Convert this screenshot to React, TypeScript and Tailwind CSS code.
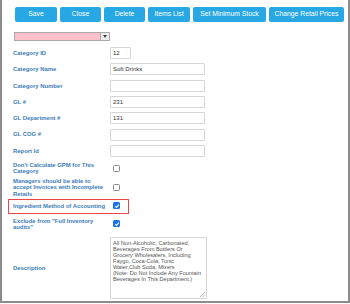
import React from "react";

const buttons = [
    { label: "Save", w: "w-[42px]" },
    { label: "Close", w: "w-[41px]" },
    { label: "Delete", w: "w-[41px]" },
    { label: "Items List", w: "w-[42px]" },
    { label: "Set Minimum Stock", w: "w-[73px]" },
    { label: "Change Retail Prices", w: "w-[75px]" },
];

const descriptionLines = [
    "All Non-Alcoholic, Carbonated,",
    "Beverages From Bottlers Or",
    "Grocery Wholesalers, Including",
    "Faygo, Coca-Cola, Tonic",
    "Water,Club Soda, Mixers",
    "(Note: Do Not Include Any Fountain",
    "Beverages In This Department.)",
];

function TextInput({ value = "", w = "w-[95px]" }: { value?: string; w?: string }) {
    return (
        <div className={`${w} h-[12px] border border-[#d6d6d6] rounded-[1px] bg-white flex items-center px-[2px] text-[6px] text-[#333]`}>
            {value}
        </div>
    );
}

function Checkbox({ checked = false }: { checked?: boolean }) {
    if (checked) {
        return (
            <div className="w-[7px] h-[7px] rounded-[1.5px] bg-[#1a73e8] flex items-center justify-center ml-[3px]">
                <svg width="6" height="6" viewBox="0 0 10 10">
                    <path d="M2 5.2 L4.2 7.4 L8.2 2.6" stroke="white" strokeWidth="1.8" fill="none" />
                </svg>
            </div>
        );
    }
    return <div className="w-[7px] h-[7px] rounded-[1.5px] border border-[#8a8a8a] bg-white ml-[3px]" />;
}

function Row({ label, h, children }: { label: React.ReactNode; h: string; children: React.ReactNode }) {
    return (
        <div className={`flex items-center ${h}`}>
            <div className="w-[97px] pr-[4px] text-[5.9px] leading-[6.4px] font-bold text-[#3a7cba]">{label}</div>
            {children}
        </div>
    );
}

export default function App() {
    return (
        <div className="w-[350px] h-[303px] bg-white border-l-2 border-r-2 border-b-2 border-[#8c8c8c] overflow-hidden" style={{ fontFamily: '"Liberation Sans", Arial, sans-serif' }}>
            <div className="flex gap-[3px] pl-[13px] pt-[7px]">
                {buttons.map((b) => (
                    <div key={b.label} className={`${b.w} h-[15px] rounded-[2px] bg-[#27a8e4] text-white text-[6.8px] flex items-center justify-center whitespace-nowrap`}>
                        {b.label}
                    </div>
                ))}
            </div>

            <div className="ml-[12px] mt-[10px] w-[96px] h-[9px] border border-[#a9a9a9] bg-[#ffc0cb] flex justify-end">
                <div className="w-[9px] h-full bg-[#ececec] border-l border-[#a9a9a9] flex items-center justify-center">
                    <svg width="4" height="3" viewBox="0 0 4 3">
                        <path d="M0 0 H4 L2 3 Z" fill="#444" />
                    </svg>
                </div>
            </div>

            <div className="pl-[11px] mt-[4px] flex flex-col">
                <Row label="Category ID" h="h-[16.3px]">
                    <TextInput value="12" w="w-[21px]" />
                </Row>
                <Row label="Category Name" h="h-[16.3px]">
                    <TextInput value="Soft Drinks" />
                </Row>
                <Row label="Category Number" h="h-[16.3px]">
                    <TextInput />
                </Row>
                <Row label="GL #" h="h-[16.3px]">
                    <TextInput value="231" />
                </Row>
                <Row label="GL Department #" h="h-[16.3px]">
                    <TextInput value="131" />
                </Row>
                <Row label="GL COG #" h="h-[16.3px]">
                    <TextInput />
                </Row>
                <Row label="Report Id" h="h-[16.3px]">
                    <TextInput />
                </Row>
                <Row label="Don't Calculate GPM for This Category" h="h-[18.6px]">
                    <Checkbox />
                </Row>
                <Row label="Managers should be able to accept Invoices with Incomplete Retails" h="h-[19.3px]">
                    <Checkbox />
                </Row>
                <div className="relative">
                    <div className="absolute left-[-5px] top-[2px] w-[121px] h-[15px] border-[1.5px] border-[#e8464a]" />
                    <Row label="Ingredient Method of Accounting" h="h-[18px]">
                        <Checkbox checked />
                    </Row>
                </div>
                <Row label={'Exclude from "Full Inventory audits"'} h="h-[18px]">
                    <Checkbox checked />
                </Row>
                <div className="flex items-center h-[70px] pt-[4px] pb-[4px]">
                    <div className="w-[97px] text-[5.9px] font-bold text-[#3a7cba]">Description</div>
                    <div className="relative w-[97px] h-[62px] border border-[#d6d6d6] rounded-[1px] pl-[2px] pt-[2px] text-[5.6px] leading-[6px] text-[#555] overflow-hidden">
                        {descriptionLines.map((line) => (
                            <div key={line} className="whitespace-nowrap">{line}</div>
                        ))}
                        <svg className="absolute right-[1px] bottom-[1px]" width="5" height="5" viewBox="0 0 5 5">
                            <path d="M5 0 L0 5 M5 2.5 L2.5 5" stroke="#999" strokeWidth="0.7" />
                        </svg>
                    </div>
                </div>
            </div>
        </div>
    );
}
